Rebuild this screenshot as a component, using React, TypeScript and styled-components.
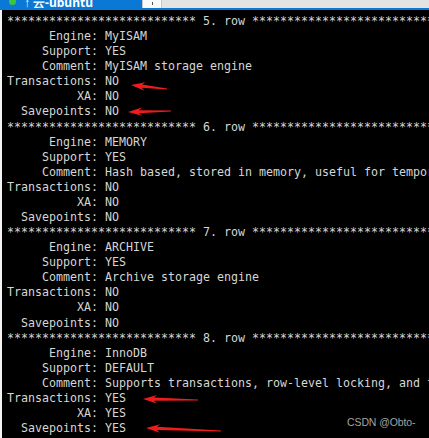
import React from "react";
import styled, { createGlobalStyle } from "styled-components";

const GlobalStyle = createGlobalStyle`
  html, body { margin: 0; padding: 0; background: #000; }
  #root { width: 429px; height: 438px; }
`;

const Window = styled.div`
  position: relative;
  width: 429px;
  height: 438px;
  overflow: hidden;
  display: flex;
  flex-direction: column;
  background: #000;
`;

const TabBar = styled.div`
  height: 8px;
  flex: none;
  display: flex;
  background: #e3e3e3;
  border-bottom: 2px solid #0a78d4;
`;

const ActiveTab = styled.div`
  width: 133px;
  background: #0a78d4;
  display: flex;
  align-items: flex-end;
  gap: 8px;
  padding-left: 9px;
  overflow: hidden;
  color: #fff;
  font-family: "Noto Sans", "Liberation Sans", sans-serif;
  font-size: 12px;
  line-height: 12px;
`;

const TabIcon = styled.span`
  width: 7px;
  height: 7px;
  border-radius: 50%;
  background: #3fc43f;
  margin-bottom: 3px;
  flex: none;
`;

const TabText = styled.span`
  margin-bottom: -1px;
  white-space: nowrap;
  font-weight: 700;
`;

const NewTab = styled.div`
  width: 18px;
  background: #fafafa;
  border-left: 1px solid #c8c8c8;
  border-right: 1px solid #c8c8c8;
  display: flex;
  justify-content: center;
  align-items: flex-end;
`;

const Tick = styled.span`
  width: 1px;
  height: 3px;
  background: #555;
  margin-bottom: 3px;
`;

const Terminal = styled.div`
  flex: 1;
  background: #000;
  border-left: 2px solid #f4f4f4;
  padding: 4px 0 0 5px;
  color: #d6d6d6;
  font-family: "DejaVu Sans Mono", "Liberation Mono", monospace;
  font-size: 11.63px;
  line-height: 15.08px;
  overflow: hidden;
`;

const Line = styled.div`
  white-space: pre;
  height: 15.08px;
`;

const Overlay = styled.svg`
  position: absolute;
  left: 0;
  top: 0;
  pointer-events: none;
`;

const Watermark = styled.div`
  position: absolute;
  left: 347px;
  top: 416px;
  color: #a3a3a3;
  font-family: "Liberation Sans", Arial, sans-serif;
  font-size: 10.5px;
  letter-spacing: -0.1px;
`;

const stars = "***************************";

type Row = {
  n: number;
  engine: string;
  support: string;
  comment: string;
  tx: string;
  xa: string;
  sp: string;
};

const rows: Row[] = [
  { n: 5, engine: "MyISAM", support: "YES", comment: "MyISAM storage engine", tx: "NO", xa: "NO", sp: "NO" },
  {
    n: 6,
    engine: "MEMORY",
    support: "YES",
    comment: "Hash based, stored in memory, useful for temporary tables",
    tx: "NO",
    xa: "NO",
    sp: "NO",
  },
  { n: 7, engine: "ARCHIVE", support: "YES", comment: "Archive storage engine", tx: "NO", xa: "NO", sp: "NO" },
  {
    n: 8,
    engine: "InnoDB",
    support: "DEFAULT",
    comment: "Supports transactions, row-level locking, and foreign keys",
    tx: "YES",
    xa: "YES",
    sp: "YES",
  },
];

const lines: string[] = [];
rows.forEach((r) => {
  lines.push(`${stars} ${r.n}. row ${stars}`);
  lines.push(`      Engine: ${r.engine}`);
  lines.push(`     Support: ${r.support}`);
  lines.push(`     Comment: ${r.comment}`);
  lines.push(`Transactions: ${r.tx}`);
  lines.push(`          XA: ${r.xa}`);
  lines.push(`  Savepoints: ${r.sp}`);
});
lines.push(`${stars} 9. row ${stars}`);

type Arrow = { x1: number; y1: number; x2: number; y2: number };
const arrows: Arrow[] = [
  { x1: 131, y1: 85, x2: 167, y2: 89 },
  { x1: 128, y1: 112, x2: 171, y2: 111 },
  { x1: 143, y1: 399, x2: 198, y2: 400 },
  { x1: 146, y1: 428, x2: 221, y2: 431 },
];

function arrowPoints(a: Arrow): string {
  const dx = a.x2 - a.x1;
  const dy = a.y2 - a.y1;
  const len = Math.hypot(dx, dy);
  const ux = dx / len;
  const uy = dy / len;
  const nx = -uy;
  const ny = ux;
  const head = 12;
  const hw = 4.2;
  const sw = 1.6;
  const tw = 0.5;
  const bx = a.x1 + ux * head;
  const by = a.y1 + uy * head;
  const p = (x: number, y: number) => `${x.toFixed(2)},${y.toFixed(2)}`;
  return [
    p(a.x1, a.y1),
    p(bx + nx * hw + ux * 2, by + ny * hw + uy * 2),
    p(bx + nx * sw - ux * 1, by + ny * sw - uy * 1),
    p(a.x2 + nx * tw, a.y2 + ny * tw),
    p(a.x2 - nx * tw, a.y2 - ny * tw),
    p(bx - nx * sw - ux * 1, by - ny * sw - uy * 1),
    p(bx - nx * hw + ux * 2, by - ny * hw + uy * 2),
  ].join(" ");
}

export default function App() {
  return (
    <>
      <GlobalStyle />
      <Window>
        <TabBar>
          <ActiveTab>
            <TabIcon />
            <TabText>↑ 云-ubuntu</TabText>
          </ActiveTab>
          <NewTab>
            <Tick />
          </NewTab>
        </TabBar>
        <Terminal>
          {lines.map((l, i) => (
            <Line key={i}>{l}</Line>
          ))}
        </Terminal>
        <Overlay width={429} height={438} viewBox="0 0 429 438">
          {arrows.map((a, i) => (
            <polygon key={i} points={arrowPoints(a)} fill="#ee1c1c" />
          ))}
        </Overlay>
        <Watermark>CSDN @Obto-</Watermark>
      </Window>
    </>
  );
}
